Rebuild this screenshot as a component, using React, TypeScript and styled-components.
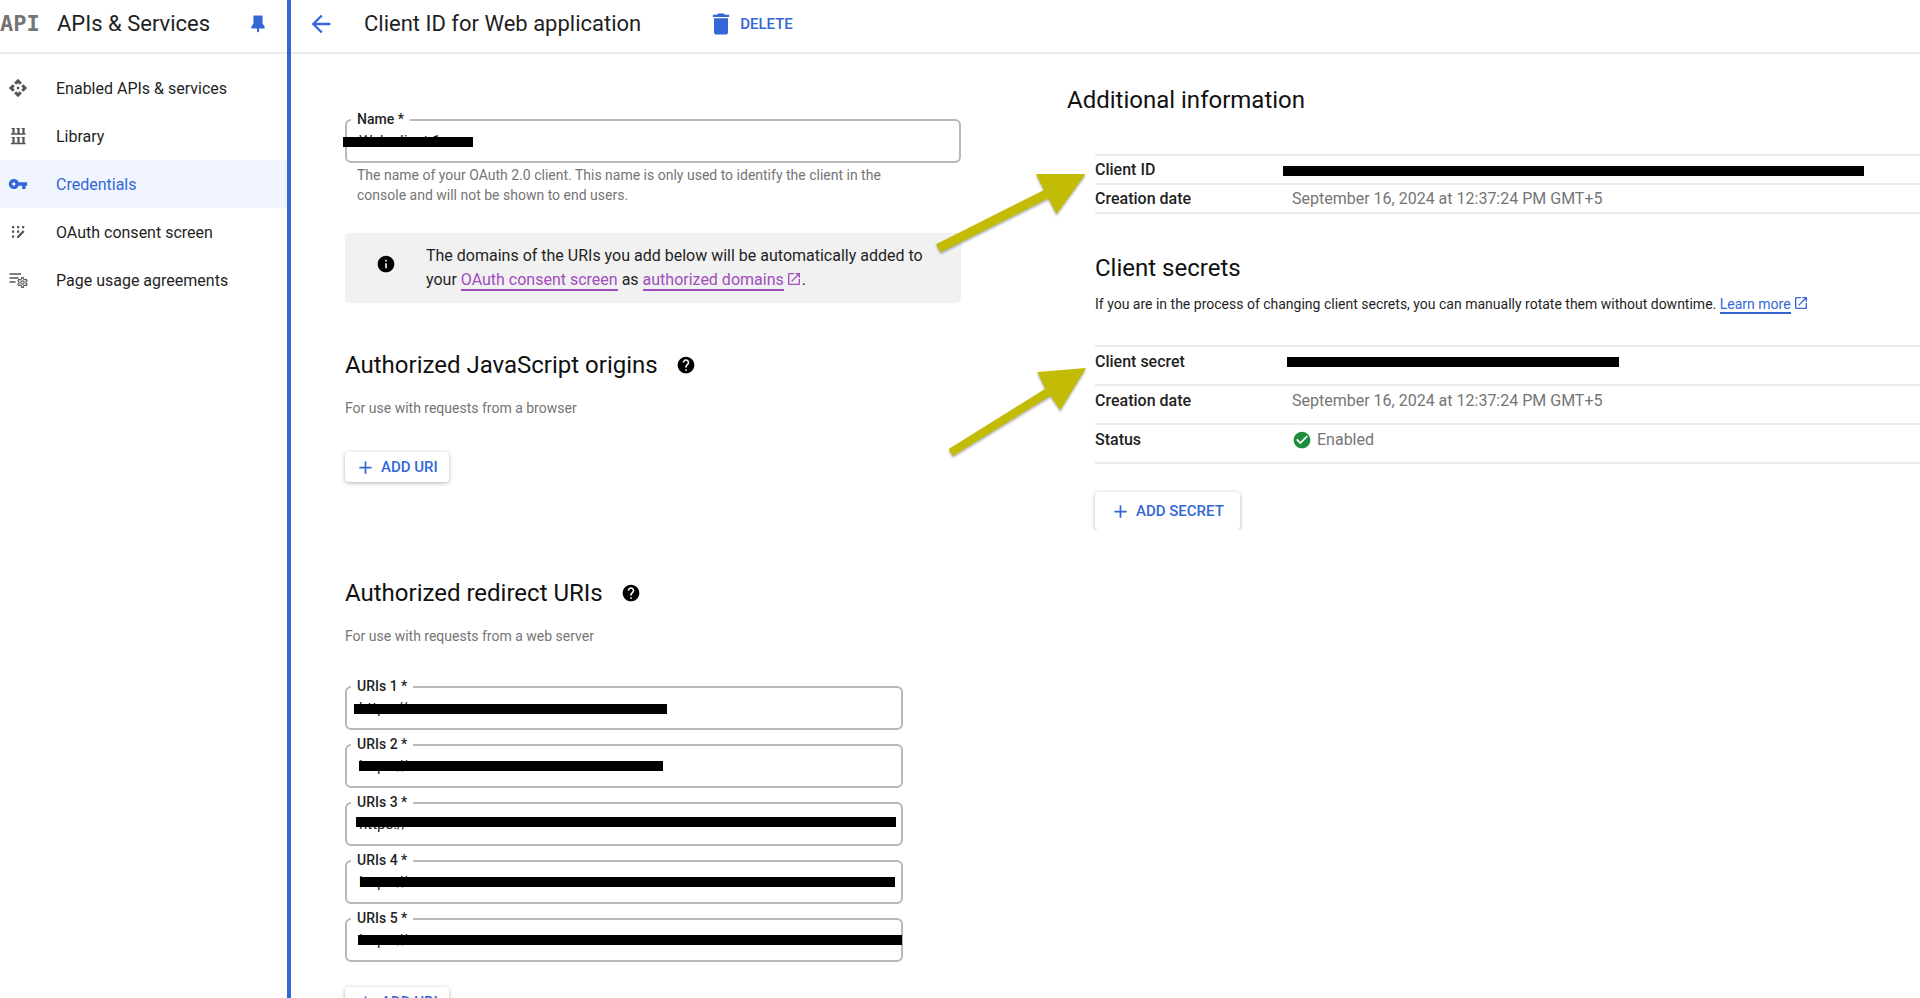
import React from 'react';
import styled, { createGlobalStyle } from 'styled-components';
import {
  MdAdd,
  MdApi,
  MdArrowBack,
  MdCheckCircle,
  MdDelete,
  MdHelp,
  MdInfo,
  MdOpenInNew,
  MdOutlineSettings,
  MdVpnKey,
} from 'react-icons/md';

const BLUE = '#3367d6';
const INK = '#1f1f1f';
const MUTED = '#757575';
const LINE = '#ebebeb';
const PURPLE = '#a04dbd';

const GlobalStyle = createGlobalStyle`
  *, *::before, *::after { box-sizing: border-box; }
  body {
    margin: 0;
    background: #fff;
    color: ${INK};
    font-family: Roboto, "Liberation Sans", sans-serif;
    font-size: 16px;
  }
  h1, h2, p, ul { margin: 0; padding: 0; font-weight: 400; }
  button, input { font: inherit; }
`;

const Shell = styled.div`
  display: grid;
  grid-template-columns: 291px minmax(0, 1fr);
  height: 100vh;
  overflow: hidden;
`;

const Sidebar = styled.aside`
  border-right: 4px solid ${BLUE};
`;

const Bar = styled.header`
  display: flex;
  align-items: center;
  height: 54px;
  padding-bottom: 4px;
  border-bottom: 2px solid ${LINE};
`;

const Product = styled.span`
  width: 57px;
  font-family: "DejaVu Sans Mono", monospace;
  font-weight: 700;
  font-size: 22px;
  line-height: 24px;
  color: ${MUTED};
`;

const BarTitle = styled.h1`
  font-size: 22px;
  line-height: 24px;
`;

const PinButton = styled.button`
  display: flex;
  margin-left: auto;
  margin-right: 21px;
  padding: 0;
  border: 0;
  background: none;
  color: ${BLUE};
`;

const NavList = styled.ul`
  padding-top: 10px;
  list-style: none;
`;

const NavLink = styled.a<{ $active?: boolean }>`
  display: flex;
  align-items: center;
  height: 48px;
  padding-left: 8px;
  gap: 28px;
  text-decoration: none;
  color: ${(p) => (p.$active ? BLUE : INK)};
  background: ${(p) => (p.$active ? '#eff4fe' : 'transparent')};
  svg { color: ${(p) => (p.$active ? BLUE : '#555')}; }
`;

const Main = styled.main`
  min-width: 0;
  overflow-y: auto;
  scrollbar-width: none;
`;

const BackLink = styled.a`
  display: flex;
  margin: 0 29px 0 16px;
  color: ${BLUE};
`;

const TextButton = styled.button`
  display: flex;
  align-items: center;
  gap: 5px;
  margin-left: 66px;
  padding: 0;
  border: 0;
  background: none;
  color: ${BLUE};
  font-size: 15px;
  font-weight: 500;
`;

const Columns = styled.div`
  display: grid;
  grid-template-columns: minmax(0, 616px) minmax(0, 1fr);
  gap: 106px;
  padding-left: 54px;
`;

const FormColumn = styled.form`
  padding: 65px 0 40px;
`;

const Field = styled.div`
  position: relative;
  height: 44px;
`;

const FieldLabel = styled.label`
  position: absolute;
  top: -8px;
  left: 6px;
  padding: 0 6px;
  background: #fff;
  font-size: 14px;
  line-height: 16px;
  font-weight: 500;
`;

const FieldInput = styled.input`
  width: 100%;
  height: 44px;
  padding: 0 12px;
  border: 2px solid #b8b8b8;
  border-radius: 6px;
  background: #fff;
  color: ${INK};
  font-size: 15px;
  outline: 0;
`;

const Redaction = styled.span<{ $x: number; $y: number; $w: number }>`
  position: absolute;
  left: ${(p) => p.$x}px;
  top: ${(p) => p.$y}px;
  width: ${(p) => p.$w}px;
  height: 10px;
  background: #000;
`;

const Hint = styled.p`
  padding: 2px 48px 0 12px;
  font-size: 14px;
  line-height: 20px;
  color: ${MUTED};
`;

const Notice = styled.div`
  display: flex;
  align-items: center;
  gap: 30px;
  margin: 28px 0 49px;
  padding: 11px 31px;
  border-radius: 5px;
  background: #f1f1f1;
  line-height: 24px;
  > svg { flex: none; margin-bottom: 8px; color: #000; }
`;

const InlineLink = styled.a<{ $color: string }>`
  color: ${(p) => p.$color};
  text-decoration: none;
  span { border-bottom: 2px solid currentColor; }
  svg { margin-left: 2px; vertical-align: -2px; }
`;

const SectionTitle = styled.h2`
  display: flex;
  align-items: center;
  gap: 18px;
  font-size: 24px;
  line-height: 26px;
  color: #111;
  svg { color: #000; }
`;

const SectionNote = styled.p`
  padding-top: 20px;
  font-size: 14px;
  line-height: 20px;
  color: ${MUTED};
`;

const RaisedButton = styled.button<{ $large?: boolean }>`
  display: flex;
  align-items: center;
  gap: 5px;
  height: ${(p) => (p.$large ? 38 : 30)}px;
  padding: 0 ${(p) => (p.$large ? 16 : 11)}px 0 ${(p) => (p.$large ? 15 : 10)}px;
  border: 0;
  border-radius: 4px;
  background: #fff;
  box-shadow: 0 1px 4px rgba(0, 0, 0, 0.3);
  color: ${BLUE};
  font-size: 15px;
  font-weight: 500;
`;

const Origins = styled.section`
  display: grid;
  justify-items: start;
  padding-bottom: 98px;
  ${RaisedButton} { margin-top: 34px; }
`;

const Redirects = styled.section`
  display: grid;
  justify-items: start;
`;

const UriList = styled.div`
  display: grid;
  gap: 14px;
  width: 100%;
  max-width: 558px;
  padding: 40px 0 25px;
`;

const InfoColumn = styled.section`
  position: relative;
  padding-top: 33px;
`;

const InfoTitle = styled(SectionTitle)`
  padding-bottom: 41px;
`;

const Indent = styled.div`
  padding-left: 28px;
`;

const Details = styled.table<{ $row: number }>`
  width: 100%;
  border-collapse: collapse;
  border-top: 2px solid ${LINE};
  th, td {
    position: relative;
    height: ${(p) => p.$row}px;
    padding: 0 0 ${(p) => (p.$row > 30 ? 8 : 0)}px;
    border-bottom: 2px solid ${LINE};
    text-align: left;
    line-height: 18px;
  }
  th { width: 197px; font-weight: 500; }
  td { color: ${MUTED}; }
`;

const Status = styled.span`
  display: flex;
  align-items: center;
  gap: 5px;
  svg { color: #1e8e3e; }
`;

const SecretsTitle = styled(SectionTitle)`
  padding-top: 41px;
`;

const SecretsNote = styled.p`
  padding: 13px 0 31px;
  font-size: 14px;
  line-height: 20px;
`;

const SecretAction = styled.div`
  padding: 28px 4px 0;
  margin: 0 -4px;
  overflow: hidden;
`;

const Pointers = styled.svg`
  position: absolute;
  top: 110px;
  left: -137px;
  pointer-events: none;
  filter: drop-shadow(0 2px 1px rgba(0, 0, 0, 0.3));
`;

const PinIcon = () => (
  <svg width="16" height="20" viewBox="0 0 16 20" fill="currentColor" aria-hidden="true">
    <path d="M4 1.6h8l.6.8v7.4l2 2.6v2.2H9v2.8l-1 1.2-1-1.2v-2.8H1.4v-2.2l2-2.6V2.4z" />
  </svg>
);

const LibraryIcon = () => (
  <svg width="20" height="20" viewBox="0 0 20 20" stroke="currentColor" strokeWidth="2.2" aria-hidden="true">
    <path d="M5.5 2v6M10.5 2v6M15.5 2v6M5.5 11v6M10.5 11v6M15.5 11v6" />
    <path d="M3.5 2.5h3M8.5 2.5h3M13.5 2.5h3M3.5 11.5h3M8.5 11.5h3M13.5 11.5h3" strokeWidth="1" />
    <path d="M3 8h14.5M3 17.5h14.5" strokeWidth="1.6" />
  </svg>
);

const ConsentIcon = () => (
  <svg width="20" height="20" viewBox="0 0 20 20" fill="currentColor" aria-hidden="true">
    <path d="M4 4h2.2v2.2H4zM9 4h2.2v2.2H9zM14 4h2.2v2.2H14zM4 8.5h2.2v2.2H4zM9 8.5h2.2v2.2H9zM4 13.5h2.2v2.2H4z" />
    <path d="M9 16v-1.8l6-6 1.6 1.6-6 6.2z" />
  </svg>
);

const AgreementsIcon = () => (
  <svg width="20" height="20" viewBox="0 0 20 20" aria-hidden="true">
    <path d="M1.5 4h11.500M1.5 8h9M1.5 12h6" stroke="currentColor" strokeWidth="1.7" />
    <MdOutlineSettings x={8} y={6} size={13} />
  </svg>
);

const NAV = [
  { label: 'Enabled APIs & services', icon: <MdApi size={20} /> },
  { label: 'Library', icon: <LibraryIcon /> },
  { label: 'Credentials', icon: <MdVpnKey size={20} />, active: true },
  { label: 'OAuth consent screen', icon: <ConsentIcon /> },
  { label: 'Page usage agreements', icon: <AgreementsIcon /> },
];

const URIS = [
  { x: 9, y: 18, w: 313 },
  { x: 14, y: 17, w: 304 },
  { x: 11, y: 15, w: 540 },
  { x: 15, y: 17, w: 535 },
  { x: 13, y: 17, w: 544 },
];

export default function App() {
  return (
    <>
      <GlobalStyle />
      <Shell>
        <Sidebar>
          <Bar>
            <Product>API</Product>
            <BarTitle as="span">APIs &amp; Services</BarTitle>
            <PinButton type="button" aria-label="Unpin menu">
              <PinIcon />
            </PinButton>
          </Bar>
          <nav aria-label="APIs and services">
            <NavList>
              {NAV.map((item) => (
                <li key={item.label}>
                  <NavLink href="#" $active={item.active} aria-current={item.active ? 'page' : undefined}>
                    {item.icon}
                    {item.label}
                  </NavLink>
                </li>
              ))}
            </NavList>
          </nav>
        </Sidebar>

        <Main>
          <Bar>
            <BackLink href="#" aria-label="Back">
              <MdArrowBack size={28} />
            </BackLink>
            <BarTitle>Client ID for Web application</BarTitle>
            <TextButton type="button">
              <MdDelete size={28} />
              DELETE
            </TextButton>
          </Bar>

          <Columns>
            <FormColumn>
              <Field>
                <FieldInput id="name" defaultValue="Web client 1" />
                <FieldLabel htmlFor="name">Name *</FieldLabel>
                <Redaction $x={-2} $y={18} $w={130} />
              </Field>
              <Hint>
                The name of your OAuth 2.0 client. This name is only used to identify the client in the
                console and will not be shown to end users.
              </Hint>

              <Notice>
                <MdInfo size={20} />
                <p>
                  The domains of the URIs you add below will be automatically added to your{' '}
                  <InlineLink href="#" $color={PURPLE}>
                    <span>OAuth consent screen</span>
                  </InlineLink>{' '}
                  as{' '}
                  <InlineLink href="#" $color={PURPLE}>
                    <span>authorized domains</span>
                    <MdOpenInNew size={16} />
                  </InlineLink>
                  .
                </p>
              </Notice>

              <Origins>
                <SectionTitle>
                  Authorized JavaScript origins
                  <MdHelp size={20} />
                </SectionTitle>
                <SectionNote>For use with requests from a browser</SectionNote>
                <RaisedButton type="button">
                  <MdAdd size={21} />
                  ADD URI
                </RaisedButton>
              </Origins>

              <Redirects>
                <SectionTitle>
                  Authorized redirect URIs
                  <MdHelp size={20} />
                </SectionTitle>
                <SectionNote>For use with requests from a web server</SectionNote>
                <UriList>
                  {URIS.map((bar, i) => (
                    <Field key={i}>
                      <FieldInput id={`uri-${i + 1}`} defaultValue="https://" />
                      <FieldLabel htmlFor={`uri-${i + 1}`}>URIs {i + 1} *</FieldLabel>
                      <Redaction $x={bar.x} $y={bar.y} $w={bar.w} />
                    </Field>
                  ))}
                </UriList>
                <RaisedButton type="button">
                  <MdAdd size={21} />
                  ADD URI
                </RaisedButton>
              </Redirects>
            </FormColumn>

            <InfoColumn>
              <InfoTitle>Additional information</InfoTitle>
              <Indent>
                <Details $row={29}>
                  <tbody>
                    <tr>
                      <th scope="row">Client ID</th>
                      <td>
                        <Redaction $x={-9} $y={10} $w={581} />
                      </td>
                    </tr>
                    <tr>
                      <th scope="row">Creation date</th>
                      <td>September 16, 2024 at 12:37:24 PM GMT+5</td>
                    </tr>
                  </tbody>
                </Details>

                <SecretsTitle>Client secrets</SecretsTitle>
                <SecretsNote>
                  If you are in the process of changing client secrets, you can manually rotate them
                  without downtime.{' '}
                  <InlineLink href="#" $color={BLUE}>
                    <span>Learn more</span>
                    <MdOpenInNew size={16} />
                  </InlineLink>
                </SecretsNote>

                <Details $row={39}>
                  <tbody>
                    <tr>
                      <th scope="row">Client secret</th>
                      <td>
                        <Redaction $x={-5} $y={10} $w={332} />
                      </td>
                    </tr>
                    <tr>
                      <th scope="row">Creation date</th>
                      <td>September 16, 2024 at 12:37:24 PM GMT+5</td>
                    </tr>
                    <tr>
                      <th scope="row">Status</th>
                      <td>
                        <Status>
                          <MdCheckCircle size={20} />
                          Enabled
                        </Status>
                      </td>
                    </tr>
                  </tbody>
                </Details>

                <SecretAction>
                  <RaisedButton type="button" $large>
                    <MdAdd size={21} />
                    ADD SECRET
                  </RaisedButton>
                </SecretAction>
              </Indent>

              <Pointers width="160" height="300" viewBox="930 164 160 300" fill="#c2bc06" aria-hidden="true">
                <path d="M936 244.3 1044 190 1036 174H1085.5L1056.5 214 1048.3 198.3 940.7 252.3z" />
                <path d="M948.7 449 1045.3 388.7 1037.3 372 1086 368 1060.3 410 1050.3 395.7 952.7 456z" />
              </Pointers>
            </InfoColumn>
          </Columns>
        </Main>
      </Shell>
    </>
  );
}
